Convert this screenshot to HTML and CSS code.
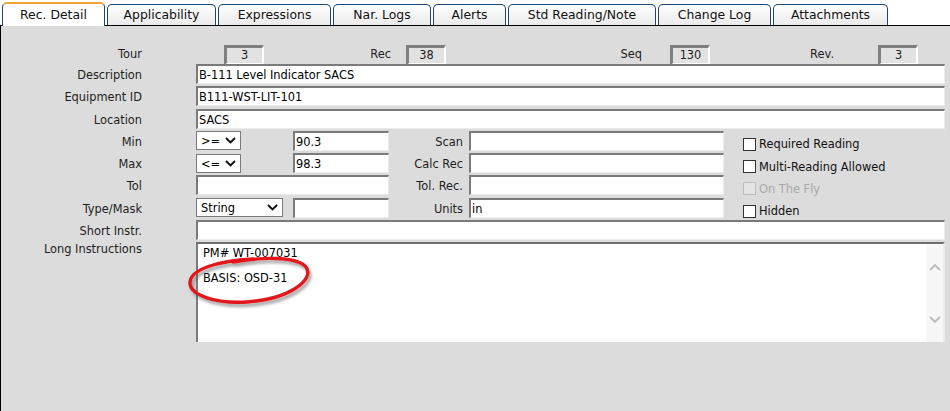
FILE: index.html
```html
<!DOCTYPE html>
<html>
<head>
<meta charset="utf-8">
<link rel="stylesheet" href="styles.css">
</head>
<body>
<div class="tabs">
  <div class="tab active">Rec. Detail</div>
  <div class="tab">Applicability</div>
  <div class="tab">Expressions</div>
  <div class="tab">Nar. Logs</div>
  <div class="tab">Alerts</div>
  <div class="tab">Std Reading/Note</div>
  <div class="tab">Change Log</div>
  <div class="tab">Attachments</div>
</div>
<div class="panel">
  <div class="hdr">
    <span class="hl hl1">Tour</span><span class="hbox hb1">3</span>
    <span class="hl hl2">Rec</span><span class="hbox hb2">38</span>
    <span class="hl hl3">Seq</span><span class="hbox hb3">130</span>
    <span class="hl hl4">Rev.</span><span class="hbox hb4">3</span>
  </div>
  <div class="form">
    <div class="lbl">Description</div>
    <div class="inp wide">B-111 Level Indicator SACS</div>

    <div class="lbl">Equipment ID</div>
    <div class="inp wide">B111-WST-LIT-101</div>

    <div class="lbl">Location</div>
    <div class="inp wide">SACS</div>

    <div class="lbl">Min</div>
    <div class="pair">
      <div class="sel sel-op"><span>&gt;=</span><svg class="chev" viewBox="0 0 11 7" width="11" height="7"><path d="M1 1 L5.5 5.5 L10 1" fill="none" stroke="#111" stroke-width="1.9"/></svg></div>
      <div class="inp num">90.3</div>
    </div>
    <div class="lbl2">Scan</div>
    <div class="inp fb"></div>
    <div class="chk"><span class="box"></span>Required Reading</div>

    <div class="lbl">Max</div>
    <div class="pair">
      <div class="sel sel-op"><span>&lt;=</span><svg class="chev" viewBox="0 0 11 7" width="11" height="7"><path d="M1 1 L5.5 5.5 L10 1" fill="none" stroke="#111" stroke-width="1.9"/></svg></div>
      <div class="inp num">98.3</div>
    </div>
    <div class="lbl2">Calc Rec</div>
    <div class="inp fb"></div>
    <div class="chk"><span class="box"></span>Multi-Reading Allowed</div>

    <div class="lbl">Tol</div>
    <div class="inp fa"></div>
    <div class="lbl2">Tol. Rec.</div>
    <div class="inp fb"></div>
    <div class="chk disabled"><span class="box"></span>On The Fly</div>

    <div class="lbl">Type/Mask</div>
    <div class="pair">
      <div class="sel sel-type"><span>String</span><svg class="chev" viewBox="0 0 11 7" width="11" height="7"><path d="M1 1 L5.5 5.5 L10 1" fill="none" stroke="#111" stroke-width="1.9"/></svg></div>
      <div class="inp num"></div>
    </div>
    <div class="lbl2">Units</div>
    <div class="inp fb">in</div>
    <div class="chk"><span class="box"></span>Hidden</div>

    <div class="lbl">Short Instr.</div>
    <div class="inp wide"></div>

    <div class="lbl top">Long Instructions</div>
    <div class="area">
      <div class="area-text">
        <div>PM# WT-007031</div>
        <div class="blank"></div>
        <div>BASIS: OSD-31</div>
      </div>
      <div class="scroll">
        <svg viewBox="0 0 12 7" width="12" height="7"><path d="M1 6 L6 1.2 L11 6" fill="none" stroke="#bdbdbd" stroke-width="2"/></svg>
        <svg viewBox="0 0 12 7" width="12" height="7"><path d="M1 1 L6 5.8 L11 1" fill="none" stroke="#bdbdbd" stroke-width="2"/></svg>
      </div>
    </div>
  </div>
  <svg class="circle" width="136" height="60" viewBox="0 0 136 60">
    <defs>
      <filter id="sh" x="-20%" y="-20%" width="140%" height="160%">
        <feDropShadow dx="2" dy="3" stdDeviation="1.6" flood-color="#555" flood-opacity="0.55"/>
      </filter>
    </defs>
    <path d="M48 9 C75 4 112 3 121 14 C130 27 104 46 62 49 C30 51 4 42 5 29 C6 17 30 8 68 6" fill="none" stroke="#e3151b" stroke-width="3.4" stroke-linecap="round" filter="url(#sh)"/>
  </svg>
</div>
</body>
</html>
```
FILE: styles.css
```css
* { box-sizing: border-box; }
html, body { margin: 0; padding: 0; }
body {
  width: 950px;
  height: 411px;
  overflow: hidden;
  background: #fff;
  font-family: "DejaVu Sans", Verdana, sans-serif;
  font-size: 11.4px;
  color: #1e1e1e;
}
.tabs {
  display: flex;
  align-items: flex-end;
  gap: 2px;
  height: 26px;
  padding-left: 2px;
  border-bottom: 1px solid #000;
}
.tab {
  height: 21px;
  font-size: 12.4px;
  line-height: 20px;
  text-align: center;
  color: #111;
  white-space: nowrap;
  border: 1px solid #1d4576;
  border-bottom: none;
  border-radius: 5px 5px 0 0;
  background: linear-gradient(#ffffff, #ebebeb);
}
.tab:nth-child(1) { width: 103px; }
.tab:nth-child(2) { width: 109px; }
.tab:nth-child(3) { width: 113px; }
.tab:nth-child(4) { width: 98px; }
.tab:nth-child(5) { width: 73px; }
.tab:nth-child(6) { width: 148px; }
.tab:nth-child(7) { width: 113px; }
.tab:nth-child(8) { width: 115px; }
.tab.active {
  height: 24px;
  margin-bottom: -1px;
  line-height: 22px;
  background: #fff;
  border-top: 2px solid #f2a33a;
}
.panel {
  position: relative;
  height: 385px;
  background: #dcdcdc;
  box-shadow: inset 1px 0 0 #000;
}
.hdr {
  display: flex;
  align-items: flex-start;
  height: 38px;
  padding-top: 19px;
}
.hl {
  display: block;
  text-align: right;
  line-height: 14px;
  padding-top: 2px;
}
.hl1 { width: 142px; }
.hbox {
  display: block;
  height: 20px;
  width: 40px;
  text-align: center;
  line-height: 15px;
  background: #e2e2e2;
  border-top: 3px solid #7f7f7f;
  border-left: 3px solid #7f7f7f;
  border-right: 2px solid #fff;
  border-bottom: 2px solid #fff;
}
.hb1 { margin-left: 82px; }
.hl2 { width: 127px; }
.hb2 { margin-left: 15px; }
.hl3 { width: 196px; }
.hb3 { margin-left: 28px; }
.hl4 { width: 124px; }
.hb4 { margin-left: 44px; }

.form {
  display: grid;
  grid-template-columns: 142px 54px 193px 74px 6px 255px 19px 1fr;
  grid-template-rows: repeat(8, 20px) 100px;
  row-gap: 2.25px;
  padding-right: 5px;
}
.lbl {
  grid-column: 1;
  text-align: right;
  line-height: 20px;
  padding-top: 1px;
}
.lbl.top { line-height: 14px; padding-top: 0; }
.lbl2 {
  grid-column: 4;
  text-align: right;
  line-height: 20px;
  padding-top: 1px;
}
.inp {
  height: 20px;
  background: #fff;
  border-top: 2px solid #7a7a7a;
  border-left: 2px solid #7a7a7a;
  border-right: 1px solid #ececec;
  border-bottom: 1px solid #ececec;
  padding-left: 1px;
  padding-top: 1px;
  line-height: 16px;
  color: #000;
  white-space: nowrap;
  overflow: hidden;
}
.wide { grid-column: 3 / -1; }
.fa { grid-column: 3; }
.fb { grid-column: 6; }
.pair {
  grid-column: 3;
  display: flex;
  align-items: center;
}
.num { width: 96px; margin-left: auto; }
.sel {
  height: 19px;
  display: flex;
  align-items: center;
  justify-content: space-between;
  background: #fff;
  border: 1px solid #7a7a7a;
  padding: 1px 4px 0 4px;
  color: #000;
}
.sel .chev { margin-top: -1px; }
.sel-op { width: 45px; }
.sel-type { width: 87px; }
.chk {
  grid-column: 8;
  display: flex;
  align-items: center;
  gap: 3px;
  padding-top: 7px;
  color: #111;
}
.chk .box {
  width: 13px;
  height: 13px;
  background: #fff;
  border: 1px solid #333;
}
.chk.disabled { color: #a8a8a8; }
.chk.disabled .box { background: #e4e4e4; border-color: #bcbcbc; }
.area {
  grid-column: 3 / -1;
  height: 100px;
  display: flex;
  background: #fff;
  border-top: 2px solid #6e6e6e;
  border-left: 2px solid #7a7a7a;
  border-right: 2px solid #ececec;
}
.area-text {
  flex: 1;
  padding: 3px 0 0 5px;
  line-height: 12.5px;
  color: #000;
}
.blank { height: 12.5px; }
.scroll {
  width: 17px;
  background: #f7f7f7;
  display: flex;
  flex-direction: column;
  align-items: center;
  justify-content: space-between;
  padding: 20px 0 19px;
}
.circle {
  position: absolute;
  left: 185px;
  top: 227px;
}
```
